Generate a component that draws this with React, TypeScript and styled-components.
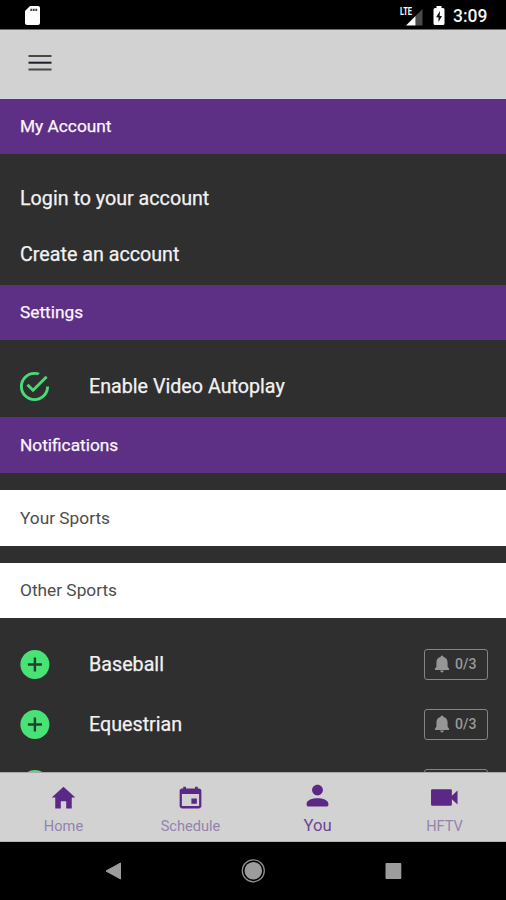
import React from 'react';
import styled, { createGlobalStyle } from 'styled-components';

const GlobalStyle = createGlobalStyle`
  * { box-sizing: border-box; }
  body { margin: 0; background: #000; font-family: Roboto, "Liberation Sans", sans-serif; }
`;

const Screen = styled.div`
  width: 506px;
  height: 900px;
  display: flex;
  flex-direction: column;
  overflow: hidden;
  background: #2f2f2f;
`;

const StatusBar = styled.header`
  flex: 0 0 30px;
  display: flex;
  align-items: center;
  padding: 2px 18px 0 24px;
  background: #000;
  border-bottom: 1px solid #6a6a6a;
`;

const StatusIcons = styled.div`
  display: flex;
  align-items: center;
  margin-left: auto;
`;

const Clock = styled.span`
  width: 35px;
  margin-left: 8px;
  padding-top: 1px;
  color: #f4f4f4;
  font-size: 17.5px;
  font-weight: 500;
  line-height: 24px;
  white-space: nowrap;
`;

const Toolbar = styled.div`
  flex: 0 0 69px;
  display: flex;
  padding: 24px 28px 0;
  background: #d2d2d2;
  border-bottom: 1px solid #d9d2e4;
`;

const Content = styled.main`
  flex: 1;
  min-height: 0;
  overflow: hidden;
`;

const SectionTitle = styled.h2<{ $height: number }>`
  height: ${p => p.$height}px;
  margin: 0;
  padding-left: 20px;
  background: #5e3085;
  color: #fbf6ff;
  font-size: 17.3px;
  font-weight: 400;
  line-height: ${p => p.$height}px;
  -webkit-text-stroke: 0.25px #fbf6ff;
`;

const Links = styled.div`
  height: 131px;
  padding-top: 16px;
`;

const LinkRow = styled.div`
  height: 56px;
  padding-left: 20px;
  color: #f2f2f2;
  font-size: 19.7px;
  line-height: 58px;
  -webkit-text-stroke: 0.25px #f2f2f2;
`;

const Setting = styled.div`
  height: 77px;
  padding: 16px 0 0;
`;

const Row = styled.div`
  height: 60px;
  display: flex;
  align-items: center;
  padding: 0 18px 0 17px;
`;

const RowLabel = styled.span`
  margin-left: 37px;
  padding-top: 2px;
  color: #f2f2f2;
  font-size: 19.7px;
  line-height: 28px;
  -webkit-text-stroke: 0.25px #f2f2f2;
`;

const SubTitle = styled.h3`
  height: 56px;
  margin: 17px 0 0;
  padding-left: 20px;
  background: #fff;
  color: #4d4d4d;
  font-size: 17.3px;
  font-weight: 400;
  line-height: 56px;
  & + & { margin-top: 17px; height: 55px; line-height: 54px; }
`;

const SportList = styled.div`
  padding-top: 16px;
`;

const Badge = styled.span`
  width: 64px;
  height: 31px;
  margin-left: auto;
  display: flex;
  align-items: center;
  padding-left: 9px;
  border: 1.5px solid #858585;
  border-radius: 3px;
  color: #999;
  font-size: 14px;
  font-weight: 500;
`;

const Count = styled.span`
  margin-left: 5px;
`;

const TabBar = styled.nav`
  flex: 0 0 70px;
  display: grid;
  grid-template-columns: repeat(4, 127px);
  background: #d2d2d2;
  border-top: 1px solid #aaa;
  border-bottom: 1px solid #b5b5b5;
`;

const Tab = styled.div<{ $active?: boolean }>`
  display: flex;
  flex-direction: column;
  align-items: center;
  padding-top: ${p => (p.$active ? 8 : 10)}px;
  color: #5b2886;
`;

const TabLabel = styled.span<{ $active?: boolean }>`
  margin-top: ${p => (p.$active ? 6 : 4)}px;
  color: ${p => (p.$active ? '#6c4596' : '#9483ae')};
  font-size: ${p => (p.$active ? 16.7 : 14.6)}px;
  line-height: 20px;
`;

const SystemBar = styled.footer`
  flex: 0 0 58px;
  display: flex;
  justify-content: space-between;
  align-items: center;
  padding: 0 103px;
  background: #000;
`;

const SdCard = () => (
  <svg width="17" height="21" viewBox="0 0 17 21">
    <path fill="#fff" d="M6 1h8q2 0 2 2v15q0 2-2 2H3q-2 0-2-2V6z" />
    <path stroke="#444" strokeWidth="2.200" strokeDasharray="1.9 .6" d="M6.300 4.800h7" />
  </svg>
);

const SignalIcon = styled.svg`
  margin-right: 10px;
`;

const Signal = () => (
  <SignalIcon width="23" height="22" viewBox="0 0 23 22">
    <path fill="#4a4a4a" d="M22.500 4v16.500h-7V11z" />
    <path fill="#fff" d="M15.500 11v9.500H6z" />
    <text x="0" y="10" fill="#fff" fontSize="11" fontWeight="700" textLength="12" lengthAdjust="spacingAndGlyphs">LTE</text>
  </SignalIcon>
);

const Battery = () => (
  <svg width="12" height="20" viewBox="0 0 12 20">
    <path fill="#fff" d="M3.500 0h5v2H10q1.500 0 1.500 1.500v14Q11.500 19 10 19H2Q.5 19 .5 17.500v-14Q.5 2 2 2h1.500z" />
    <path fill="#111" d="M7 5 3 11.300h2.500V16l3.500-6H6.700z" />
  </svg>
);

const Menu = () => (
  <svg width="24" height="18" viewBox="0 0 24 18">
    <path stroke="#48484b" strokeWidth="2.200" d="M.5 2h23M.5 15.500h23" />
    <path stroke="#1d1d29" strokeWidth="2" d="M.5 8.700h23" />
  </svg>
);

const CheckCircle = () => (
  <svg width="35" height="35" viewBox="0 0 24 24" fill="#48db76">
    <path d="M20 12A8 8 0 0 1 12 20A8 8 0 0 1 4 12A8 8 0 0 1 12 4C12.760 4 13.500 4.110 14.200 4.310L15.770 2.740C14.610 2.260 13.340 2 12 2A10 10 0 0 0 2 12A10 10 0 0 0 12 22A10 10 0 0 0 22 12ZM7.910 10.080L6.500 11.500L11 16L21 6L19.590 4.580L11 13.170Z" />
  </svg>
);

const AddCircle = () => (
  <svg width="35" height="35" viewBox="0 0 35 35">
    <circle cx="17.900" cy="17.500" r="14.500" fill="#48e277" />
    <path stroke="#24402d" strokeWidth="2.400" d="M10.900 17.500h14M17.900 10.500v14" />
  </svg>
);

const Bell = () => (
  <svg width="16" height="18" viewBox="0 0 16 18" fill="#969696">
    <path d="M8 .5q1.500 0 1.500 1.500c2.900.7 4.100 2.900 4.100 5.700v4l1.500 2v1.200H.9v-1.200l1.500-2v-4c0-2.800 1.200-5 4.100-5.700Q6.500.5 8 .5zM6.200 15.500h3.600q-.2 2-1.800 2t-1.800-2z" />
  </svg>
);

const tabIcons: Record<string, string> = {
  Home: 'M208 448V320h96v128h97.600V256H464L256 64 48 256h62.400v192z',
  Schedule:
    'M368 272h-96v96h96v-96zM336 64v32H176V64h-48v32h-24c-22 0-40 18-40 40v272c0 22 18 40 40 40h304c22 0 40-18 40-40V136c0-22-18-40-40-40h-24V64h-48zm72 344H104V196h304v212z',
  You: 'M256 256c53 0 96-43 96-96s-43-96-96-96-96 43-96 96 43 96 96 96zm0 48c-90 0-192 32-192 98v22q0 24 24 24h336q24 0 24-24v-22c0-66-102-98-192-98z',
  HFTV: 'M40 110h324q22 0 22 22v92l100-90v244l-100-90v92q0 22-22 22H40q-22 0-22-22V132q0-22 22-22z',
};

const TabIcon = ({ name }: { name: string }) => (
  <svg width="29" height="29" viewBox="0 0 512 512" fill="currentColor">
    <path d={tabIcons[name]} />
  </svg>
);

const sports = ['Baseball', 'Equestrian'];

export default function App() {
  return (
    <>
      <GlobalStyle />
      <Screen>
        <StatusBar>
          <SdCard />
          <StatusIcons>
            <Signal />
            <Battery />
            <Clock>3:09</Clock>
          </StatusIcons>
        </StatusBar>
        <Toolbar><Menu /></Toolbar>
        <Content>
          <SectionTitle $height={55}>My Account</SectionTitle>
          <Links>
            <LinkRow>Login to your account</LinkRow>
            <LinkRow>Create an account</LinkRow>
          </Links>
          <SectionTitle $height={55}>Settings</SectionTitle>
          <Setting>
            <Row>
              <CheckCircle />
              <RowLabel>Enable Video Autoplay</RowLabel>
            </Row>
          </Setting>
          <SectionTitle $height={56}>Notifications</SectionTitle>
          <SubTitle>Your Sports</SubTitle>
          <SubTitle>Other Sports</SubTitle>
          <SportList>
            {sports.map(sport => (
              <Row key={sport}>
                <AddCircle />
                <RowLabel>{sport}</RowLabel>
                <Badge><Bell /><Count>0/3</Count></Badge>
              </Row>
            ))}
            <Row>
              <AddCircle />
              <Badge />
            </Row>
          </SportList>
        </Content>
        <TabBar>
          {Object.keys(tabIcons).map(name => (
            <Tab key={name} $active={name === 'You'}>
              <TabIcon name={name} />
              <TabLabel $active={name === 'You'}>{name}</TabLabel>
            </Tab>
          ))}
        </TabBar>
        <SystemBar>
          <svg width="20" height="20" viewBox="0 0 20 20">
            <path fill="#9c9c9c" stroke="#9c9c9c" strokeLinejoin="round" d="M3 10 17.500 2v16z" />
          </svg>
          <svg width="26" height="26" viewBox="0 0 26 26">
            <circle cx="13.300" cy="12.800" r="8.800" fill="#9c9c9c" />
            <circle cx="13.300" cy="12.800" r="11" fill="none" stroke="#909090" strokeWidth="1.300" />
          </svg>
          <svg width="20" height="20" viewBox="0 0 20 20">
            <rect x="2.500" y="2" width="15.800" height="16" rx="1" fill="#9c9c9c" />
          </svg>
        </SystemBar>
      </Screen>
    </>
  );
}
